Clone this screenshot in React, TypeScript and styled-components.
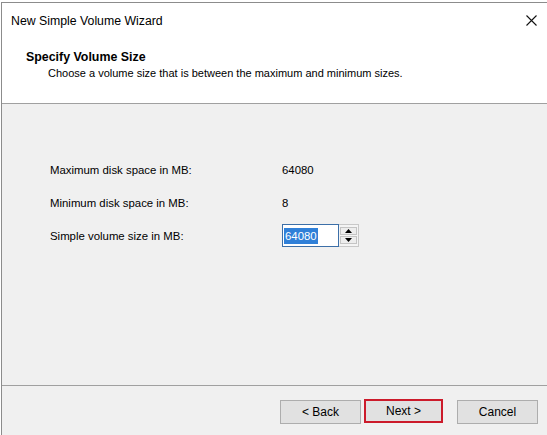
import React from "react";
import styled, { createGlobalStyle } from "styled-components";

const GlobalStyle = createGlobalStyle`
  html, body {
    margin: 0;
    padding: 0;
    background: #ffffff;
  }
  body {
    font-family: "Liberation Sans", Arial, sans-serif;
    font-size: 11.4px;
    color: #000;
  }
`;

const Window = styled.div`
  margin: 2px 0 0 1px;
  height: 433px;
  border-top: 1px solid #8c8c8c;
  border-left: 1px solid #8c8c8c;
  display: flex;
  flex-direction: column;
  box-sizing: border-box;
  background: #f0f0f0;
`;

const TitleBar = styled.div`
  height: 35px;
  background: #fff;
  display: flex;
  align-items: center;
  justify-content: space-between;
  padding: 0 6px 0 9px;
  font-size: 12.3px;
`;

const CloseButton = styled.div`
  width: 20px;
  height: 20px;
  display: flex;
  align-items: center;
  justify-content: center;
`;

const Header = styled.div`
  height: 66px;
  background: #fff;
  border-bottom: 1px solid #a0a0a0;
  padding: 11px 0 0 24px;
  box-sizing: border-box;
`;

const HeaderTitle = styled.div`
  font-weight: bold;
  font-size: 12.4px;
  line-height: 16px;
`;

const HeaderSubtitle = styled.div`
  padding-left: 22px;
  line-height: 16px;
  font-size: 11px;
`;

const Body = styled.div`
  height: 282px;
  border-bottom: 1px solid #a0a0a0;
  padding: 49px 0 0 48px;
  box-sizing: border-box;
  display: flex;
  flex-direction: column;
`;

const Row = styled.div`
  display: grid;
  grid-template-columns: 232px auto;
  align-items: center;
  height: 33px;
`;

const SpinBox = styled.div`
  display: flex;
  width: 77px;
  height: 23px;
`;

const SpinInput = styled.div`
  width: 58px;
  border: 1px solid #3c6fa8;
  background: #fff;
  display: flex;
  align-items: center;
  padding-left: 1px;
`;

const Selected = styled.span`
  background: #3080d8;
  color: #fff;
  line-height: 16px;
  padding: 0 1px;
`;

const SpinButtons = styled.div`
  display: flex;
  flex-direction: column;
  gap: 1px;
  padding: 2px 1px;
  border: 1px solid #c8c8c8;
  border-left: none;
  background: #f4f4f4;
`;

const SpinButton = styled.div`
  width: 15px;
  flex: 1;
  border: 1px solid #c4c4c4;
  background: #ededed;
  display: flex;
  align-items: center;
  justify-content: center;
`;

const Footer = styled.div`
  flex: 1;
  display: flex;
  justify-content: flex-end;
  align-items: flex-start;
  padding: 14px 9px 0 0;
  gap: 3px;
`;

const Button = styled.div<{ $marked?: boolean; $gapLeft?: number }>`
  width: ${(p) => (p.$marked ? 75 : 79)}px;
  height: ${(p) => (p.$marked ? 20 : 22)}px;
  margin-left: ${(p) => p.$gapLeft ?? 0}px;
  margin-top: ${(p) => (p.$marked ? -1 : 0)}px;
  border: ${(p) => (p.$marked ? "2px solid #cc1b2b" : "1px solid #adadad")};
  background: #e1e1e1;
  display: flex;
  align-items: center;
  justify-content: center;
  font-size: 12px;
  box-sizing: content-box;
`;

function Arrow({ up }: { up?: boolean }) {
  return (
    <svg width="7" height="4" viewBox="0 0 7 4">
      <path d={up ? "M0 4 L3.5 0 L7 4 Z" : "M0 0 L3.5 4 L7 0 Z"} fill="#000" />
    </svg>
  );
}

export default function App() {
  return (
    <>
      <GlobalStyle />
      <Window>
        <TitleBar>
          <span>New Simple Volume Wizard</span>
          <CloseButton>
            <svg width="11" height="11" viewBox="0 0 11 11">
              <path d="M0.5 0.5 L10.5 10.5 M10.5 0.5 L0.5 10.5" stroke="#111" strokeWidth="1.1" />
            </svg>
          </CloseButton>
        </TitleBar>
        <Header>
          <HeaderTitle>Specify Volume Size</HeaderTitle>
          <HeaderSubtitle>
            Choose a volume size that is between the maximum and minimum sizes.
          </HeaderSubtitle>
        </Header>
        <Body>
          <Row>
            <span>Maximum disk space in MB:</span>
            <span>64080</span>
          </Row>
          <Row>
            <span>Minimum disk space in MB:</span>
            <span>8</span>
          </Row>
          <Row>
            <span>Simple volume size in MB:</span>
            <SpinBox>
              <SpinInput>
                <Selected>64080</Selected>
              </SpinInput>
              <SpinButtons>
                <SpinButton>
                  <Arrow up />
                </SpinButton>
                <SpinButton>
                  <Arrow />
                </SpinButton>
              </SpinButtons>
            </SpinBox>
          </Row>
        </Body>
        <Footer>
          <Button>&lt; Back</Button>
          <Button $marked>Next &gt;</Button>
          <Button $gapLeft={11}>Cancel</Button>
        </Footer>
      </Window>
    </>
  );
}
